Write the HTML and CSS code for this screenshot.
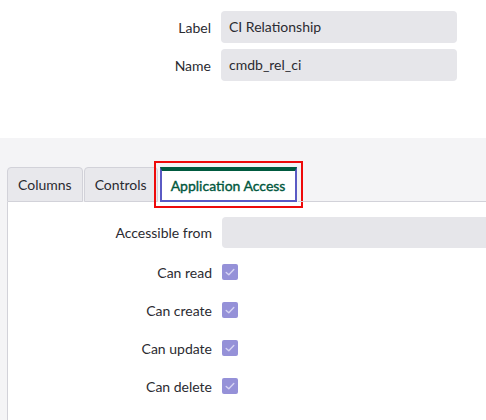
FILE: index.html
```html
<!DOCTYPE html>
<html>
<head>
<meta charset="utf-8">
<link rel="stylesheet" href="styles.css">
</head>
<body>
<div class="top">
  <div class="form">
    <div class="row"><label class="lbl">Label</label><div class="input">CI Relationship</div></div>
    <div class="row"><label class="lbl">Name</label><div class="input">cmdb_rel_ci</div></div>
  </div>
</div>
<div class="lower">
  <div class="tabs">
    <div class="tab">Columns</div>
    <div class="tab">Controls</div>
    <div class="tab active">Application Access</div>
    <div class="tab-fill"></div>
  </div>
  <div class="panel">
    <div class="prow first"><span class="plbl">Accessible from</span><div class="pinput"></div></div>
    <div class="prow"><span class="plbl">Can read</span><span class="cb"><svg viewBox="0 0 16 16" width="16" height="16"><polyline points="4.2,8.4 6.8,10.8 11.8,5.4" fill="none" stroke="#d6d4f3" stroke-width="1.4" stroke-linecap="round" stroke-linejoin="round"/></svg></span></div>
    <div class="prow"><span class="plbl">Can create</span><span class="cb"><svg viewBox="0 0 16 16" width="16" height="16"><polyline points="4.2,8.4 6.8,10.8 11.8,5.4" fill="none" stroke="#d6d4f3" stroke-width="1.4" stroke-linecap="round" stroke-linejoin="round"/></svg></span></div>
    <div class="prow"><span class="plbl">Can update</span><span class="cb"><svg viewBox="0 0 16 16" width="16" height="16"><polyline points="4.2,8.4 6.8,10.8 11.8,5.4" fill="none" stroke="#d6d4f3" stroke-width="1.4" stroke-linecap="round" stroke-linejoin="round"/></svg></span></div>
    <div class="prow"><span class="plbl">Can delete</span><span class="cb"><svg viewBox="0 0 16 16" width="16" height="16"><polyline points="4.2,8.4 6.8,10.8 11.8,5.4" fill="none" stroke="#d6d4f3" stroke-width="1.4" stroke-linecap="round" stroke-linejoin="round"/></svg></span></div>
  </div>
</div>
</body>
</html>
```
FILE: styles.css
```css
* { box-sizing: border-box; }
html, body { margin: 0; padding: 0; }
body {
  font-family: Lato, "Liberation Sans", sans-serif;
  font-size: 14px;
  color: #2b2b31;
  background: #ffffff;
  width: 486px;
  height: 420px;
  overflow: hidden;
}
.top {
  height: 138px;
  padding-top: 11px;
  background: #ffffff;
}
.form { display: flex; flex-direction: column; gap: 6px; }
.row {
  display: grid;
  grid-template-columns: 211px 236px;
  column-gap: 10px;
  align-items: center;
}
.lbl { text-align: right; }
.input {
  height: 32px;
  line-height: 32px;
  background: #e6e6ea;
  border-radius: 4px;
  padding-left: 8px;
}
.lower {
  background: #f4f4f6;
  padding-top: 29px;
  padding-left: 7px;
  height: 282px;
}
.tabs {
  display: flex;
  align-items: flex-end;
  gap: 1px;
  height: 35px;
}
.tab {
  height: 35px;
  line-height: 34px;
  padding: 0 10px;
  background: #e8e8ec;
  border: 1px solid #d2d2d9;
  border-bottom: 1px solid #d2d2d9;
  border-radius: 4px 4px 0 0;
  white-space: nowrap;
}
.tab.active {
  margin-left: 1px;
  background: #ffffff;
  color: #00573d;
  font-weight: normal;
  -webkit-text-stroke: 0.35px #00573d;
  padding: 0 10px 0 9px;
  line-height: 29px;
  border: 2px solid #5a5ac4;
  border-top: 4px solid #005a3f;
  border-radius: 0;
  outline: 2px solid #ee0a0a;
  outline-offset: 4px;
}
.tab-fill {
  flex: 1;
  align-self: stretch;
  border-bottom: 1px solid #d2d2d9;
}
.panel {
  background: #ffffff;
  border-left: 1px solid #d2d2d9;
  height: 218px;
  padding-top: 15px;
  display: flex;
  flex-direction: column;
  gap: 6px;
}
.prow {
  display: grid;
  grid-template-columns: 204px 1fr;
  column-gap: 10px;
  align-items: center;
  height: 32px;
}
.prow.first { height: 31px; margin-bottom: 2px; }
.plbl { text-align: right; }
.pinput {
  height: 31px;
  background: #e6e6ea;
  border-radius: 4px 0 0 4px;
}
.cb {
  width: 16px;
  height: 16px;
  background: #9591d8;
  border-radius: 2px;
  display: block;
}
.cb svg { display: block; }
```
